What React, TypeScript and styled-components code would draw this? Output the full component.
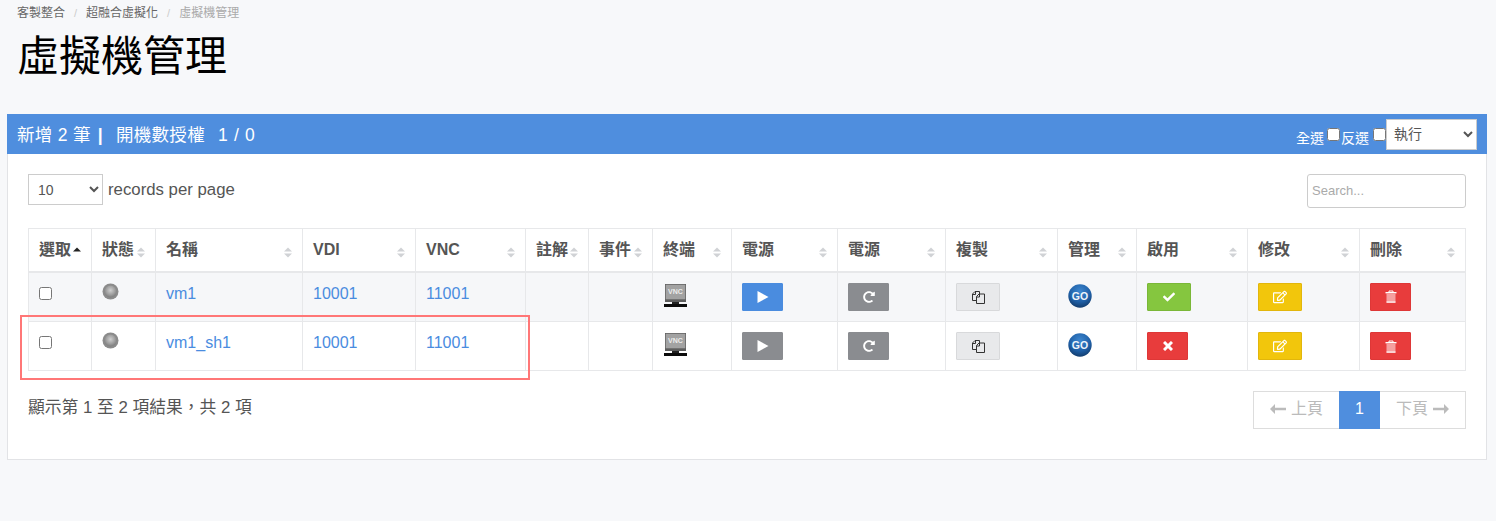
import React from "react";
import styled, { createGlobalStyle } from "styled-components";
import { FaCheck, FaRedoAlt, FaRegEdit } from "react-icons/fa";

const columns = [
  { title: "選取", width: 63, active: true },
  { title: "狀態", width: 64 },
  { title: "名稱", width: 147 },
  { title: "VDI", width: 113 },
  { title: "VNC", width: 110 },
  { title: "註解", width: 63 },
  { title: "事件", width: 64 },
  { title: "終端", width: 79 },
  { title: "電源", width: 106 },
  { title: "電源", width: 108 },
  { title: "複製", width: 112 },
  { title: "管理", width: 79 },
  { title: "啟用", width: 111 },
  { title: "修改", width: 112 },
  { title: "刪除", width: 106 },
];

const rows = [
  { name: "vm1", vdi: "10001", vnc: "11001", running: true, enabled: true },
  { name: "vm1_sh1", vdi: "10001", vnc: "11001", running: false, enabled: false },
];

function SortIcon({ active }: { active?: boolean }) {
  return (
    <SortSvg viewBox="0 0 8 11">
      <path d="M4 0.5 8 4.5H0z" fill={active ? "#222" : "#d0d2d5"} />
      {!active && <path d="M0 6.5H8L4 10.5z" fill="#d0d2d5" />}
    </SortSvg>
  );
}

function StatusBall({ id }: { id: string }) {
  return (
    <svg width="17" height="17" viewBox="0 0 17 17" display="block">
      <defs>
        <radialGradient id={id} cx="50%" cy="40%" r="60%">
          <stop offset="0%" stopColor="#cfcfcf" />
          <stop offset="60%" stopColor="#a0a0a0" />
          <stop offset="100%" stopColor="#7c7c7c" />
        </radialGradient>
      </defs>
      <circle cx="8.5" cy="8.5" r="8" fill="#8b8b8b" />
      <circle cx="8.5" cy="8.5" r="6" fill={`url(#${id})`} />
    </svg>
  );
}

function VncIcon() {
  return (
    <VncSvg viewBox="0 0 23 23">
      <rect x="1" y="0" width="21" height="18" fill="#5e5e5e" />
      <rect x="1.7" y="0.7" width="19.6" height="14.6" fill="#a2a2a2" />
      <text x="11.5" y="9.6" fontSize="7" fontWeight="700" fill="#ececec" textAnchor="middle" fontFamily="Liberation Sans, sans-serif">
        VNC
      </text>
      <rect x="8" y="18" width="7" height="2" fill="#222" />
      <rect x="0" y="20" width="23" height="3" fill="#0c0c0c" />
    </VncSvg>
  );
}

function GoIcon({ id }: { id: string }) {
  return (
    <GoSvg viewBox="0 0 24 24">
      <defs>
        <radialGradient id={id} cx="50%" cy="30%" r="75%">
          <stop offset="0%" stopColor="#3c86cf" />
          <stop offset="60%" stopColor="#1f5fa6" />
          <stop offset="100%" stopColor="#103663" />
        </radialGradient>
      </defs>
      <circle cx="12" cy="12" r="11.7" fill={`url(#${id})`} />
      <text x="12" y="15.6" fontSize="10.5" fontWeight="700" fill="#eef4fb" textAnchor="middle" fontFamily="Liberation Sans, sans-serif">
        GO
      </text>
    </GoSvg>
  );
}

function PlayIcon() {
  return (
    <svg width="12" height="12" viewBox="0 0 12 12">
      <path d="M0.5 0 11.5 6 0.5 12z" fill="currentColor" />
    </svg>
  );
}

function CopyIcon() {
  return (
    <svg width="15" height="14" viewBox="0 0 15 14" fill="none" stroke="currentColor" strokeWidth="1">
      <path d="M5.5 10.5H1.5V4L4 1.5H8.5V4" />
      <path d="M4.5 1.5V4.5H1.5" />
      <path d="M5.5 13.5V6.5L8 4H13.5V13.5z" fill="#e8e9eb" />
      <path d="M8.5 4V7H5.5" />
    </svg>
  );
}

function CrossIcon() {
  return (
    <svg width="10" height="10" viewBox="0 0 10 10" stroke="currentColor" strokeWidth="3">
      <path d="M1 1 9 9M9 1 1 9" />
    </svg>
  );
}

function TrashIcon() {
  return (
    <svg width="12" height="13" viewBox="0 0 12 13">
      <path d="M4 2V1H8V2" fill="none" stroke="#fff" />
      <rect x="0.5" y="2" width="11" height="1.4" fill="#fff" />
      <rect x="1.5" y="3.4" width="9" height="9.1" fill="#f5a0a0" />
      <rect x="1.5" y="11.5" width="9" height="1.2" fill="#fff" />
    </svg>
  );
}

function LongArrow({ right }: { right?: boolean }) {
  return (
    <svg width="16" height="10" viewBox="0 0 16 10" fill="currentColor">
      <path d={right ? "M0 3.7H11V0L16 5 11 10V6.3H0z" : "M16 3.7H5V0L0 5 5 10V6.3H16z"} />
    </svg>
  );
}

export default function App() {
  return (
    <>
      <GlobalStyle />
      <Page>
        <Breadcrumb>
          <Crumb>客製整合</Crumb>
          <Slash>/</Slash>
          <Crumb>超融合虛擬化</Crumb>
          <Slash>/</Slash>
          <Crumb $current>虛擬機管理</Crumb>
        </Breadcrumb>
        <Title>虛擬機管理</Title>

        <Panel>
          <PanelHeader>
            <HeaderInfo>
              新增 2 筆<Divider>|</Divider>開機數授權<Quota>1 / 0</Quota>
            </HeaderInfo>
            <HeaderTools>
              <CheckLabel>
                全選
                <input type="checkbox" />
              </CheckLabel>
              <CheckLabel>
                反選
                <input type="checkbox" />
              </CheckLabel>
              <ActionSelect defaultValue="run">
                <option value="run">執行</option>
              </ActionSelect>
            </HeaderTools>
          </PanelHeader>

          <PanelBody>
            <Toolbar>
              <LengthLabel>
                <LengthSelect defaultValue="10">
                  <option value="10">10</option>
                </LengthSelect>
                records per page
              </LengthLabel>
              <SearchInput placeholder="Search..." />
            </Toolbar>

            <TableWrap>
              <Table>
                <colgroup>
                  {columns.map((col, i) => (
                    <col key={i} width={col.width} />
                  ))}
                </colgroup>
                <thead>
                  <tr>
                    {columns.map((col, i) => (
                      <Th key={i}>
                        <ThInner>
                          {col.title}
                          <SortIcon active={col.active} />
                        </ThInner>
                      </Th>
                    ))}
                  </tr>
                </thead>
                <tbody>
                  {rows.map((row, i) => (
                    <Tr key={row.name} $striped={i === 0}>
                      <Td>
                        <RowCheck type="checkbox" />
                      </Td>
                      <Td>
                        <StatusBall id={`ball${i}`} />
                      </Td>
                      <Td>
                        <CellLink href="#">{row.name}</CellLink>
                      </Td>
                      <Td>
                        <CellLink href="#">{row.vdi}</CellLink>
                      </Td>
                      <Td>
                        <CellLink href="#">{row.vnc}</CellLink>
                      </Td>
                      <Td />
                      <Td />
                      <Td>
                        <VncIcon />
                      </Td>
                      <Td>
                        <ActionButton $bg={row.running ? "#4a8cdf" : "#8a8c90"}>
                          <PlayIcon />
                        </ActionButton>
                      </Td>
                      <Td>
                        <ActionButton $bg="#8a8c90">
                          <FaRedoAlt size={12} />
                        </ActionButton>
                      </Td>
                      <Td>
                        <ActionButton $bg="#e8e9eb" $border="#d8d9db" $color="#333" $wide>
                          <CopyIcon />
                        </ActionButton>
                      </Td>
                      <Td>
                        <GoIcon id={`go${i}`} />
                      </Td>
                      <Td>
                        {row.enabled ? (
                          <ActionButton $bg="#85c63f" $border="#7ab738" $wide>
                            <FaCheck size={12} />
                          </ActionButton>
                        ) : (
                          <ActionButton $bg="#e83c3c" $border="#de3737">
                            <CrossIcon />
                          </ActionButton>
                        )}
                      </Td>
                      <Td>
                        <ActionButton $bg="#f2c60c" $border="#e2b60c" $wide>
                          <FaRegEdit size={14} />
                        </ActionButton>
                      </Td>
                      <Td>
                        <ActionButton $bg="#e83c3c" $border="#de3737">
                          <TrashIcon />
                        </ActionButton>
                      </Td>
                    </Tr>
                  ))}
                </tbody>
              </Table>
              <Highlight />
            </TableWrap>

            <Footer>
              <FooterInfo>顯示第 1 至 2 項結果，共 2 項</FooterInfo>
              <Pager>
                <PageItem $w={85}>
                  <LongArrow /> 上頁
                </PageItem>
                <PageItem $w={41} $active>
                  1
                </PageItem>
                <PageItem $w={85}>
                  下頁 <LongArrow right />
                </PageItem>
              </Pager>
            </Footer>
          </PanelBody>
        </Panel>
      </Page>
    </>
  );
}

const GlobalStyle = createGlobalStyle`
  html, body {
    margin: 0;
    background: #f7f8fa;
  }

  body {
    font-family: "Liberation Sans", "Noto Sans CJK TC", sans-serif;
    color: #555;
  }

  * {
    box-sizing: border-box;
  }
`;

const Page = styled.div`
  width: 1496px;
  height: 521px;
  padding: 6px 9px 0 7px;
  overflow: hidden;
`;

const Breadcrumb = styled.div`
  display: flex;
  align-items: center;
  height: 15px;
  padding-left: 10px;
  font-size: 12px;
  line-height: 15px;
`;

const Crumb = styled.span<{ $current?: boolean }>`
  color: ${(p) => (p.$current ? "#aaa" : "#666")};
`;

const Slash = styled.span`
  margin: 0 9px;
  color: #ccc;
  font-size: 11px;
`;

const Title = styled.h1`
  margin: 7px 0 0;
  padding-left: 10px;
  height: 86px;
  font-size: 42px;
  line-height: 58px;
  font-weight: 400;
  color: #000;
`;

const Panel = styled.section`
  height: 346px;
  background: #fff;
  border: 1px solid #e2e3e6;
  border-top: 0;
`;

const PanelHeader = styled.header`
  display: flex;
  align-items: center;
  justify-content: space-between;
  height: 40px;
  margin: 0 -1px;
  padding: 0 10px;
  background: #4f8ede;
  color: #fff;
`;

const HeaderInfo = styled.div`
  padding-bottom: 2px;
  font-size: 17.5px;
  letter-spacing: 0.3px;
`;

const Divider = styled.span`
  margin: 0 13px 0 7px;
  font-weight: 700;
`;

const Quota = styled.span`
  margin-left: 13px;
  letter-spacing: 0.7px;
`;

const HeaderTools = styled.div`
  display: flex;
  align-items: center;
`;

const CheckLabel = styled.label`
  display: flex;
  align-items: center;
  font-size: 14px;
  padding-top: 5px;

  & input {
    width: 13px;
    height: 13px;
    margin: 0 0 5px 3px;
  }

  & + & {
    margin-left: 1px;
  }

  & + & input {
    margin-left: 4px;
  }
`;

const ActionSelect = styled.select`
  width: 91px;
  height: 31px;
  padding: 0 4px 0 3px;
  background: #fff;
  border: 1px solid #ccc;
  border-radius: 0;
  color: #555;
  font-family: inherit;
  font-size: 14px;
`;

const PanelBody = styled.div`
  padding: 20px 20px 30px;
`;

const Toolbar = styled.div`
  display: flex;
  align-items: flex-start;
  justify-content: space-between;
  height: 34px;
  margin-bottom: 20px;
`;

const LengthLabel = styled.label`
  display: flex;
  align-items: center;
  gap: 5px;
  height: 31px;
  font-size: 16.8px;
`;

const LengthSelect = styled.select`
  width: 75px;
  height: 31px;
  padding: 0 4px 0 5px;
  background: #fff;
  border: 1px solid #ccc;
  border-radius: 0;
  color: #555;
  font-family: inherit;
  font-size: 14px;
`;

const SearchInput = styled.input`
  width: 159px;
  height: 34px;
  padding: 0 4px 2px;
  border: 1px solid #ccc;
  border-radius: 3px;
  font-family: inherit;
  font-size: 13px;

  &::placeholder {
    color: #aaa;
  }
`;

const TableWrap = styled.div`
  position: relative;
`;

const Table = styled.table`
  width: 1437px;
  table-layout: fixed;
  border-collapse: collapse;
  font-size: 16px;
`;

const Th = styled.th`
  height: 43px;
  padding: 1px 10px 0;
  border: 1px solid #e7e8ea;
  border-bottom-width: 2px;
  text-align: left;
  font-weight: 700;
  font-size: 16px;
  color: #555;
`;

const ThInner = styled.div`
  display: flex;
  align-items: center;
  justify-content: space-between;
  line-height: 20px;
`;

const SortSvg = styled.svg`
  flex: none;
  width: 8px;
  height: 11px;
  margin-top: 4px;
`;

const Tr = styled.tr<{ $striped?: boolean }>`
  background: ${(p) => (p.$striped ? "#f6f7f9" : "#fff")};
`;

const Td = styled.td`
  height: 49px;
  padding: 10px 10px 0;
  border: 1px solid #e7e8ea;
  vertical-align: top;
  line-height: 21px;

  tr:first-child > & {
    height: 50px;
  }
`;

const RowCheck = styled.input`
  display: block;
  width: 13px;
  height: 13px;
  margin: 4px 0 0 0;
`;

const VncSvg = styled.svg`
  display: block;
  width: 23px;
  height: 23px;
  margin: 1px 0 0 1px;
`;

const GoSvg = styled.svg`
  display: block;
  width: 24px;
  height: 24px;
  margin-top: 1px;
`;

const CellLink = styled.a`
  color: #4a8cdf;
  text-decoration: none;
`;

const ActionButton = styled.button<{
  $bg: string;
  $border?: string;
  $color?: string;
  $wide?: boolean;
}>`
  display: flex;
  align-items: center;
  justify-content: center;
  width: ${(p) => (p.$wide ? 44 : 41)}px;
  height: 28px;
  padding: 0;
  background: ${(p) => p.$bg};
  border: 1px solid ${(p) => p.$border ?? p.$bg};
  border-radius: 1px;
  color: ${(p) => p.$color ?? "#fff"};
`;

const Highlight = styled.div`
  position: absolute;
  left: -8px;
  top: 87px;
  width: 510px;
  height: 65px;
  border: 2px solid #f77;
  pointer-events: none;
`;

const Footer = styled.div`
  display: flex;
  align-items: flex-start;
  justify-content: space-between;
  margin-top: 20px;
`;

const FooterInfo = styled.div`
  padding: 7px 0 0;
  font-size: 16.8px;
  line-height: 20px;
`;

const Pager = styled.nav`
  display: flex;
  height: 38px;
  border: 1px solid #ddd;
`;

const PageItem = styled.span<{ $w: number; $active?: boolean }>`
  display: flex;
  align-items: center;
  justify-content: center;
  gap: 5px;
  width: ${(p) => p.$w}px;
  margin: ${(p) => (p.$active ? "-1px 0" : "0")};
  padding-bottom: 3px;
  background: ${(p) => (p.$active ? "#4f8ede" : "#fff")};
  color: ${(p) => (p.$active ? "#fff" : "#bbb")};
  font-size: 16px;
  line-height: 20px;
`;
